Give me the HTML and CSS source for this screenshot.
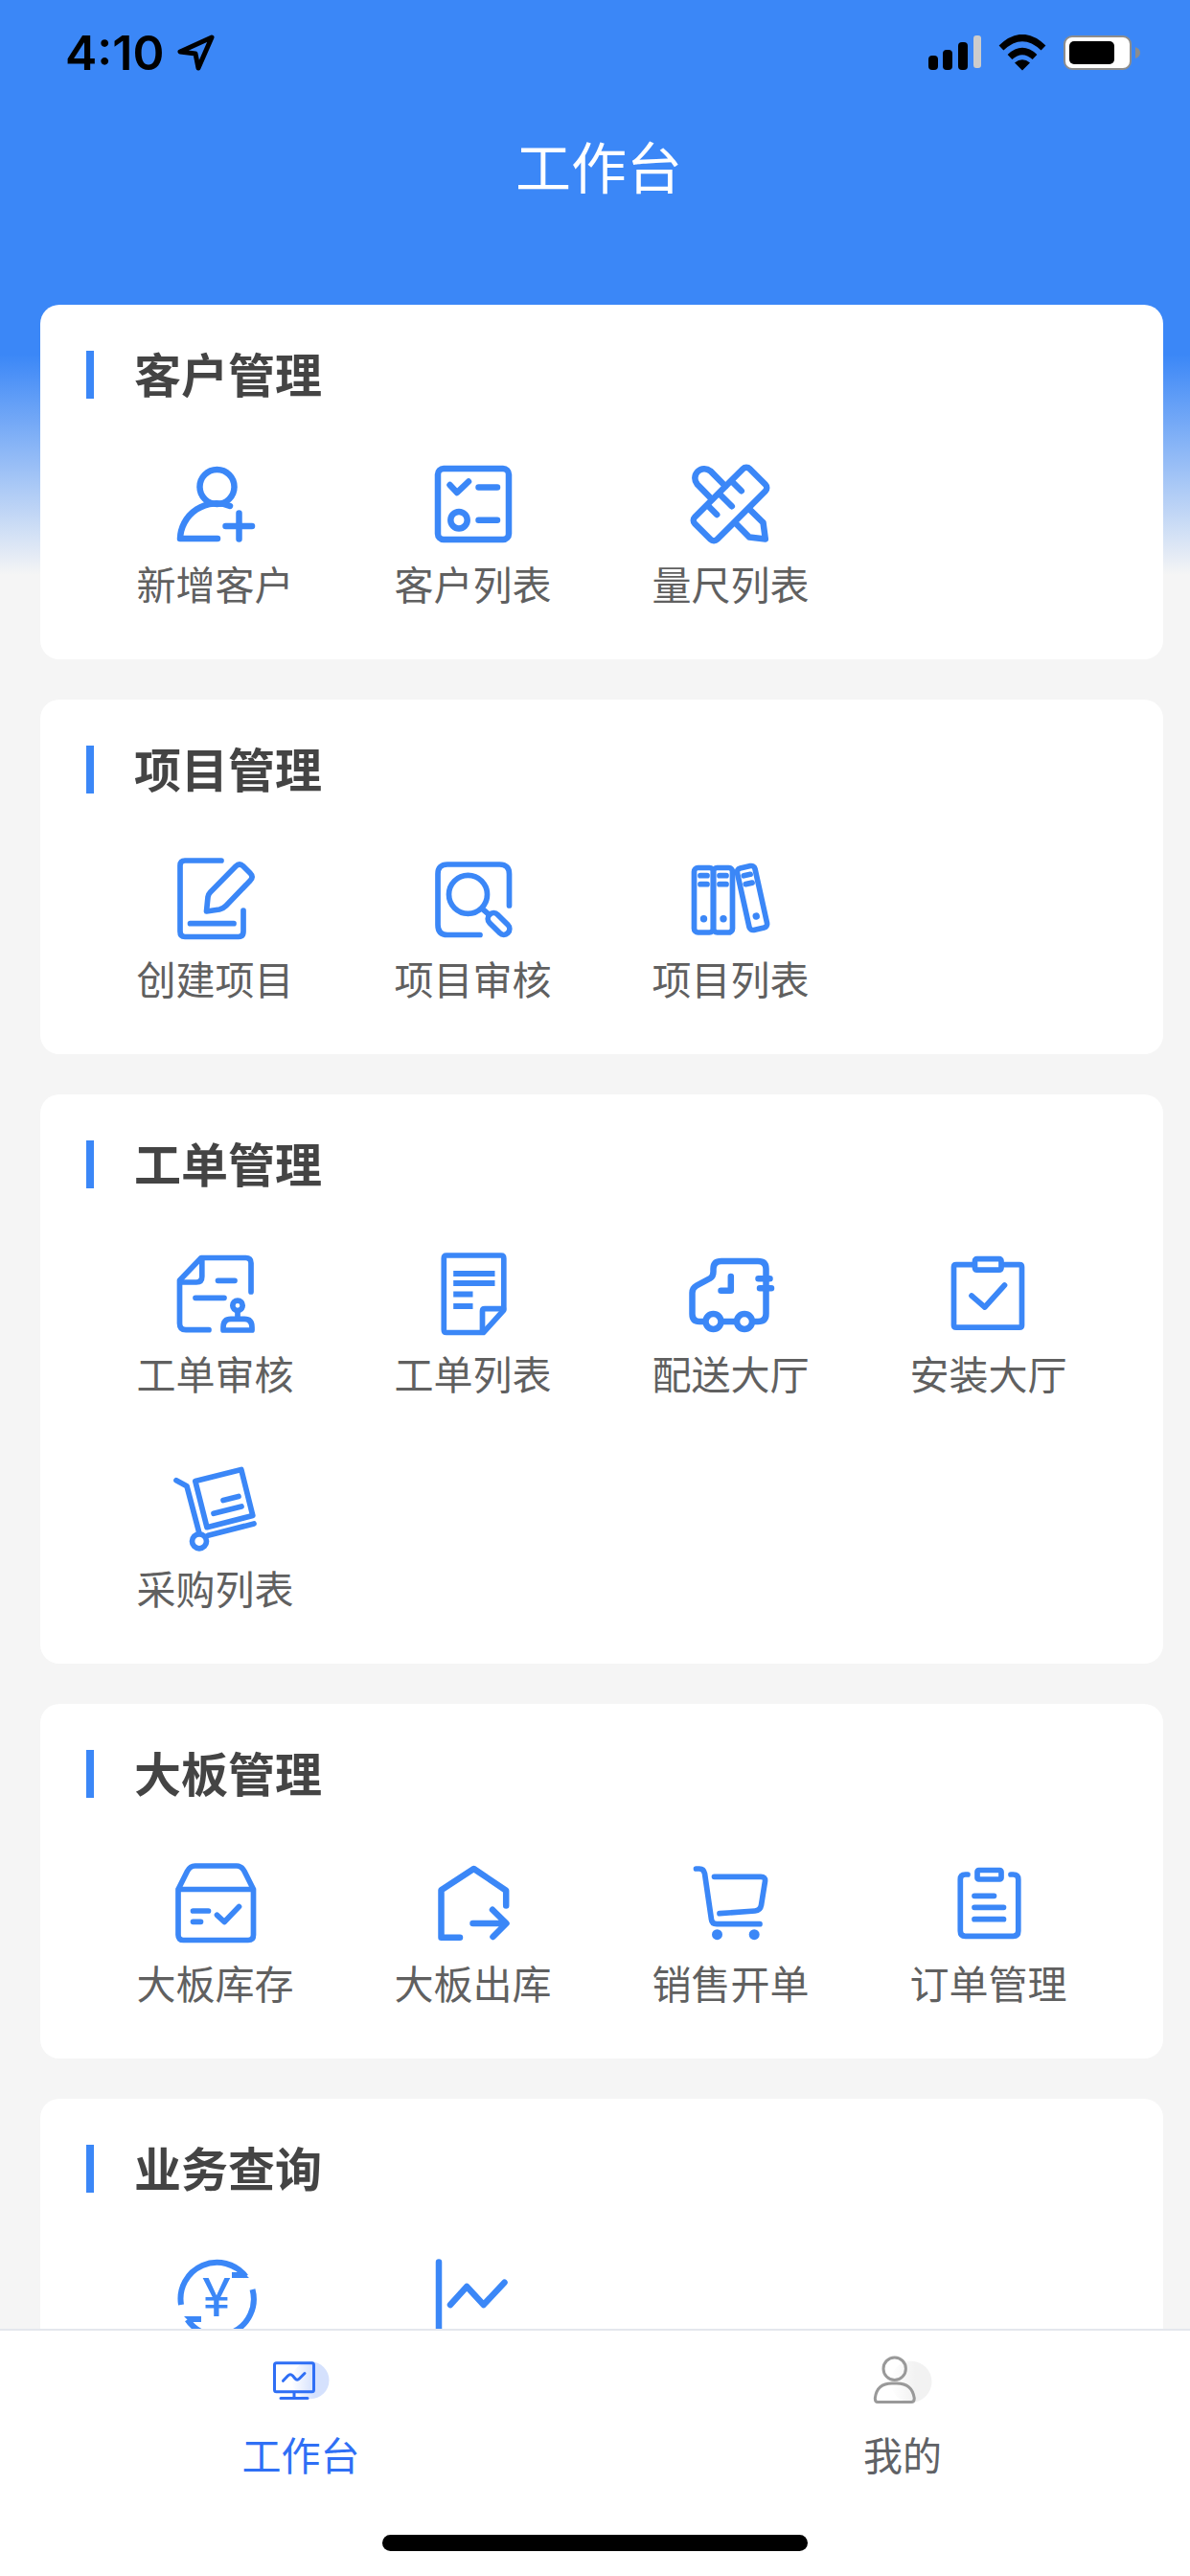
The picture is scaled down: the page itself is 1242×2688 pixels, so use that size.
FILE: index.html
```html
<!DOCTYPE html>
<html lang="zh-CN">
<head>
    <meta charset="UTF-8">
    <meta name="viewport" content="width=device-width, initial-scale=1.0">
    <title>工作台</title>
    <link rel="stylesheet" href="styles.css">
</head>
<body>
    <main class="page">
        <header class="header">
            <div class="status-bar">
                <div class="status-left">
                    <span class="time">4:10</span>
                    <svg class="location" viewBox="0 0 40 38"><path d="M36 3 L3 18 L19 20 L22 35 Z"/></svg>
                </div>
                <div class="status-right">
                    <svg width="55" height="38" viewBox="0 0 55 38">
                        <rect x="0" y="22" width="10" height="15" rx="4"/>
                        <rect x="15" y="16" width="10" height="21" rx="4"/>
                        <rect x="31" y="8" width="10" height="29" rx="4"/>
                        <rect class="off" x="47" y="1" width="8" height="34" rx="3"/>
                    </svg>
                    <svg width="50" height="38" viewBox="0 0 50 38">
                        <path class="wave" d="M3 14 Q25 -7 47 14"/>
                        <path class="wave" d="M12 23.500 Q25 11.500 38 23.500"/>
                        <path d="M17 29.500 Q25 23 33 29.500 L25 37.500 Z"/>
                    </svg>
                    <svg width="80" height="38" viewBox="0 0 80 38">
                        <rect class="battery" x="1" y="2" width="69" height="34" rx="8"/>
                        <rect x="6" y="7" width="47" height="24" rx="5"/>
                        <path class="nub" d="M75 13 Q80 15 80 19 Q80 23 75 25 Z"/>
                    </svg>
                </div>
            </div>
            <h1 class="page-title">工作台</h1>
        </header>

        <section class="card">
            <h2 class="card-title">客户管理</h2>
            <div class="menu">
                <a class="item" href="#">
                    <svg class="icon" viewBox="0 0 84 84">
                        <circle cx="43.500" cy="24" r="18"/>
                        <path d="M57 44 A38 38 0 0 0 5 78 H44"/>
                        <path d="M52.500 65 H80 M66.500 51.500 V78.500"/>
                    </svg>
                    <span>新增客户</span>
                </a>
                <a class="item" href="#">
                    <svg class="icon" viewBox="0 0 84 84">
                        <rect x="5" y="5" width="74" height="74" rx="6"/>
                        <path d="M17.500 22 L25 30 L37 18.500 M47.500 24.500 H67 M47.500 58.700 H67"/>
                        <circle cx="27" cy="58.700" r="8.700"/>
                    </svg>
                    <span>客户列表</span>
                </a>
                <a class="item" href="#">
                    <svg class="icon" viewBox="0 0 84 84">
                        <rect x="0.500" y="25.500" width="81" height="33" rx="5" transform="rotate(-45 41 42)"/>
                        <path d="M44 19.500 L52.800 28.300 M30 31.500 L42.800 44.300 M18 43.800 L27.200 53"/>
                        <path d="M36 23.200 L20.400 7.400 A9.800 9.800 0 0 0 6.600 21.200 L22 37"/>
                        <path d="M60.500 46.700 L75.500 61.300 L77.800 78.500 L61 76.500 L46.500 61.700"/>
                    </svg>
                    <span>量尺列表</span>
                </a>
            </div>
        </section>

        <section class="card">
            <h2 class="card-title">项目管理</h2>
            <div class="menu">
                <a class="item" href="#">
                    <svg class="icon thin" viewBox="0 0 84 84">
                        <path d="M48 2 H10 Q5 2 5 7 V76 Q5 81.500 10 81.500 H66 Q71 81.500 71 76 V54"/>
                        <path d="M32.500 55 L34 40 Q34.500 37 36.500 35 L63 8 Q67 4 71 8 L78 15 Q82 19 78 23 L53 49 Q50 52 46 53 Z"/>
                        <path d="M15.500 67.700 H61"/>
                    </svg>
                    <span>创建项目</span>
                </a>
                <a class="item" href="#">
                    <svg class="icon thin" viewBox="0 0 84 84">
                        <path d="M79.500 49 V16 Q79.500 6 69.500 6 H15 Q5 6 5 16 V69 Q5 79.500 15 79.500 H49"/>
                        <circle cx="36.500" cy="37.300" r="20"/>
                        <path d="M51 52 L58 58"/>
                        <rect x="55" y="62" width="27" height="12" rx="6" transform="rotate(45 68.500 68)"/>
                    </svg>
                    <span>项目审核</span>
                </a>
                <a class="item" href="#">
                    <svg class="icon thin" viewBox="0 0 84 84">
                        <rect x="3.500" y="9.500" width="20" height="67.500" rx="4"/>
                        <rect x="23.500" y="9.500" width="20" height="67.500" rx="4"/>
                        <path d="M10 17.700 H17 M10 26.700 H17 M30 17.700 H37 M30 26.700 H37"/>
                        <circle class="dot" cx="13.500" cy="62.700" r="3.700"/>
                        <circle class="dot" cx="34" cy="62.700" r="3.700"/>
                        <g transform="rotate(-12.500 64 41)">
                            <rect x="54.500" y="8" width="19" height="66" rx="4"/>
                            <path d="M60.500 16.500 H67.500 M60.500 25.500 H67.500"/>
                            <circle class="dot" cx="64" cy="60.500" r="3.700"/>
                        </g>
                    </svg>
                    <span>项目列表</span>
                </a>
            </div>
        </section>

        <section class="card">
            <h2 class="card-title">工单管理</h2>
            <div class="menu">
                <a class="item" href="#">
                    <svg class="icon thin" viewBox="0 0 84 84">
                        <path d="M79 40 V10 Q79 4.500 73.500 4.500 H27 L4.500 28 V73 Q4.500 79.700 11 79.700 H35"/>
                        <path d="M27.800 5 V24 Q27.800 30 22 30 H5"/>
                        <path d="M44.500 28.300 H62 M21 46.300 H51"/>
                        <circle cx="65" cy="54.300" r="5.200"/>
                        <path d="M65 60 V68 M50 80 V77 Q50 68.300 58 68.300 H72 Q80 68.300 80 77 V80 Z"/>
                    </svg>
                    <span>工单审核</span>
                </a>
                <a class="item" href="#">
                    <svg class="icon thin" viewBox="0 0 84 84">
                        <path d="M52.500 82.500 H14 Q11.300 82.500 11.300 79.500 V5 Q11.300 2 14 2 H71 Q73.800 2 73.800 5 V59 Z"/>
                        <path d="M73.500 57.700 H54 Q51.500 57.700 51.500 60 V82"/>
                        <path class="butt" d="M21.200 21 H64.500 M21.200 31 H64.500 M21.200 42.500 H41.500 M21.200 55 H41.500"/>
                    </svg>
                    <span>工单列表</span>
                </a>
                <a class="item" href="#">
                    <svg class="icon" viewBox="0 0 84 84">
                        <path d="M13.500 71 H9 Q1.500 71 1.500 63 V41 Q1.500 36 6 33.500 L20 26 Q23.500 24 23.500 19 V16 Q23.500 8 32 8 H70 Q78.500 8 78.500 16 V63 Q78.500 71 70 71 H67 M34 71 H46"/>
                        <circle cx="23.500" cy="71" r="8"/>
                        <circle cx="56" cy="71" r="8"/>
                        <path d="M41.800 24 V38.700 H31.500 M70.500 26.300 H82.500 M72 36.300 H84"/>
                    </svg>
                    <span>配送大厅</span>
                </a>
                <a class="item" href="#">
                    <svg class="icon thin" viewBox="0 0 84 84">
                        <path d="M27 11.700 H8 Q5.500 11.700 5.500 14 V75 Q5.500 77.200 8 77.200 H74 Q76.500 77.200 76.500 75 V14 Q76.500 11.700 74 11.700 H56"/>
                        <rect x="27.500" y="5.700" width="27.500" height="11.500" rx="2"/>
                        <path d="M24 44 L37.800 56 L58.500 33"/>
                    </svg>
                    <span>安装大厅</span>
                </a>
                <a class="item" href="#">
                    <svg class="icon thin" viewBox="0 0 84 84">
                        <path d="M1 12.700 L12 18.700 L25 68 M34 70.300 L82 58"/>
                        <circle cx="25" cy="76.300" r="7.500"/>
                        <path d="M20.800 13.500 L68.800 1.500 L80.800 49.500 L33 61.700 Z"/>
                        <path d="M50 33.500 L66 29.500 M40 47.300 L69 40"/>
                    </svg>
                    <span>采购列表</span>
                </a>
            </div>
        </section>

        <section class="card">
            <h2 class="card-title">大板管理</h2>
            <div class="menu">
                <a class="item" href="#">
                    <svg class="icon thin" viewBox="0 0 84 84">
                        <path d="M3 27.500 L12.500 8.500 Q15.500 3 20.500 3 H64 Q69 3 72 8.500 L81.500 27.500 V75 Q81.500 80.500 76 80.500 H8.500 Q3 80.500 3 75 Z M3 27.500 H81.500"/>
                        <path d="M18.500 50 H34.500 M18.500 61.300 H26.500 M43.500 54.300 L51.200 61.500 L66.500 45.500"/>
                    </svg>
                    <span>大板库存</span>
                </a>
                <a class="item" href="#">
                    <svg class="icon" viewBox="0 0 84 84">
                        <path d="M76.200 44.500 V28.700 L42.500 6 L8.500 28.300 V77.700 H28"/>
                        <path d="M41.500 63 H76 M62 48.700 L76.500 63 L62.500 77"/>
                    </svg>
                    <span>大板出库</span>
                </a>
                <a class="item" href="#">
                    <svg class="icon thin" viewBox="0 0 84 84">
                        <path d="M5.500 6 H9 Q13.500 6 14.500 11 L21.500 59 Q22 63.700 27 63.700 H72"/>
                        <path d="M24.500 14.300 H73 Q78 14.300 77.500 19 L73.500 44 Q72.500 49.500 67 50 L30 52.700"/>
                        <circle class="dot" cx="27.500" cy="74.700" r="5.500"/>
                        <circle class="dot" cx="66.200" cy="74.700" r="5.500"/>
                    </svg>
                    <span>销售开单</span>
                </a>
                <a class="item" href="#">
                    <svg class="icon thin" viewBox="0 0 84 84">
                        <path d="M20 12 H17.500 Q12.300 12 12.300 17 V71 Q12.300 76.300 17.500 76.300 H67.500 Q72.800 76.300 72.800 71 V17 Q72.800 12 67.500 12 H65"/>
                        <rect x="30" y="7.500" width="25" height="9.500" rx="1.500"/>
                        <path d="M27 34.300 H47.500 M27 46.300 H57.500 M27 58.700 H57.500"/>
                    </svg>
                    <span>订单管理</span>
                </a>
            </div>
        </section>

        <section class="card">
            <h2 class="card-title">业务查询</h2>
            <div class="menu">
                <a class="item" href="#">
                    <svg class="icon" viewBox="0 0 84 84">
                        <path class="butt" d="M6 49 A38 38 0 0 1 73.500 19.500 M80.500 33 A38 38 0 0 1 12.500 64.500"/>
                        <path class="dot" d="M59 15 H71 L77 21 H59 Z M27 61 H9 L15 67 H27 Z"/>
                        <text class="yen" x="43" y="61">¥</text>
                    </svg>
                </a>
                <a class="item" href="#">
                    <svg class="icon" viewBox="0 0 84 84">
                        <path d="M6 4.500 V79 H78 M18 49 L35.200 30 L52.700 49 L74.500 25.700"/>
                    </svg>
                </a>
            </div>
        </section>
    </main>

    <nav class="tab-bar">
        <div class="tabs">
            <a class="tab active" href="#">
                <svg class="tab-icon" viewBox="0 0 60 48">
                    <defs>
                        <linearGradient id="blue">
                            <stop offset="0" stop-color="#fff"/>
                            <stop offset="0.600" stop-color="#d5e1fd"/>
                        </linearGradient>
                    </defs>
                    <circle cx="40" cy="23.700" r="19.500" fill="url(#blue)"/>
                    <path class="line" d="M4.500 5.700 H41.500 Q43.500 5.700 43.500 7.700 V33.700 Q43.500 35.700 41.500 35.700 H4.500 Q2.500 35.700 2.500 33.700 V7.700 Q2.500 5.700 4.500 5.700 Z M23 36 V42 M9 42.500 H37"/>
                    <path class="line" d="M11.500 24.300 L16.500 19 Q19 16.500 21.500 19 L24 22 Q26 24.500 28.500 22 L34 16.500"/>
                </svg>
                <span>工作台</span>
            </a>
            <a class="tab" href="#">
                <svg class="tab-icon" viewBox="0 0 60 48">
                    <defs>
                        <linearGradient id="grey">
                            <stop offset="0" stop-color="#fff"/>
                            <stop offset="0.600" stop-color="#f2f2f2"/>
                        </linearGradient>
                    </defs>
                    <circle cx="39" cy="25.300" r="21.500" fill="url(#grey)"/>
                    <circle class="line" cx="21.700" cy="11.700" r="11.700"/>
                    <path class="line" d="M4 46.500 Q1.300 46.500 1.300 42.500 Q3 27 19 27 H24 Q40 27 42.300 42.500 Q42.300 46.500 39 46.500 Z"/>
                </svg>
                <span>我的</span>
            </a>
        </div>
        <div class="home-indicator"></div>
    </nav>
</body>
</html>
```
FILE: styles.css
```css
* {
    box-sizing: border-box;
}

body {
    display: flex;
    flex-direction: column;
    height: 100vh;
    margin: 0;
    font-family: "Noto Sans CJK SC", sans-serif;
    background: #f5f5f5;
}

a {
    color: inherit;
    text-decoration: none;
}

/* scrolling area */
.page {
    flex: 1;
    min-height: 0;
    overflow-y: auto;
    scrollbar-width: none;
    background: linear-gradient(#3b87f7 370px, #f5f5f5 600px);
}

.header {
    height: 318px;
    color: #fff;
}

.status-bar {
    display: flex;
    justify-content: space-between;
    align-items: center;
    height: 110px;
    padding: 0 52px 0 68px;
    color: #000;
}

.status-left {
    display: flex;
    align-items: center;
    gap: 14px;
}

.time {
    font-family: Inter, sans-serif;
    font-size: 50px;
    font-weight: 600;
    line-height: 60px;
}

.location {
    width: 40px;
    height: 38px;
    fill: none;
    stroke: #000;
    stroke-width: 5;
    stroke-linejoin: round;
}

.status-right {
    display: flex;
    align-items: center;
    gap: 18px;
}

.off {
    fill: #ccc;
}

.wave {
    fill: none;
    stroke: #000;
    stroke-width: 7;
}

.battery {
    fill: #fff;
    stroke: #8d8d8d;
    stroke-width: 2;
}

.nub {
    fill: #8d8d8d;
}

.page-title {
    margin: 0;
    padding-left: 8px;
    font-size: 58px;
    font-weight: 400;
    line-height: 124px;
    text-align: center;
}

.card {
    margin: 0 28px 42px 42px;
    padding: 48px 48px 50px;
    background: #fff;
    border-radius: 20px;
}

.card-title {
    display: flex;
    align-items: flex-start;
    gap: 42px;
    margin: 0 0 68px;
    color: #444;
    font-size: 49px;
    font-weight: 700;
    line-height: 46px;
}

.card-title::before {
    content: "";
    width: 8px;
    height: 50px;
    background: #3b87f7;
}

.menu {
    display: grid;
    grid-template-columns: repeat(4, 1fr);
    row-gap: 70px;
}

.item {
    display: flex;
    flex-direction: column;
    align-items: center;
    gap: 10px;
    color: #606060;
    font-size: 41px;
    line-height: 60px;
}

.icon {
    width: 84px;
    height: 84px;
    overflow: visible;
    fill: none;
    stroke: #3b87f7;
    stroke-width: 6.5;
    stroke-linecap: round;
    stroke-linejoin: round;
}

.thin {
    stroke-width: 5.7;
}

.butt {
    stroke-width: 6;
    stroke-linecap: butt;
}

.dot {
    fill: #3b87f7;
    stroke: none;
}

.yen {
    fill: #3b87f7;
    stroke: none;
    font-family: Roboto, sans-serif;
    font-size: 56px;
    font-weight: 400;
    text-anchor: middle;
}

.tab-bar {
    padding-bottom: 26px;
    background: #fff;
    border-top: 2px solid #e4e7ed;
}

.tabs {
    display: grid;
    grid-template-columns: 1fr 1fr;
    column-gap: 28px;
    padding: 28px 0 55px 14px;
}

.tab {
    display: flex;
    flex-direction: column;
    align-items: center;
    gap: 22px;
    color: #606266;
    font-size: 41px;
    line-height: 60px;
}

.tab.active {
    color: #2f6ff5;
}

.tab-icon {
    width: 60px;
    height: 48px;
    overflow: visible;
}

.line {
    fill: none;
    stroke: #999;
    stroke-width: 3;
    stroke-linecap: round;
}

.active .line {
    stroke: #2f6ff5;
}

.home-indicator {
    width: 444px;
    height: 17px;
    margin: 0 auto;
    background: #000;
    border-radius: 9px;
}
```
